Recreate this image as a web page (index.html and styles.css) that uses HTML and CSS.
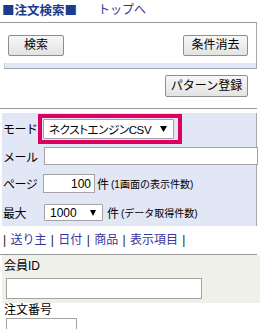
FILE: index.html
```html
<!DOCTYPE html>
<html lang="ja">
<head>
<meta charset="utf-8">
<title>注文検索</title>
<link rel="stylesheet" href="styles.css">
</head>
<body>
<div class="page">
  <header class="head">
    <h1 class="title">■注文検索■</h1>
    <a class="top-link" href="#">トップへ</a>
  </header>

  <div class="actions">
    <div class="btn-row">
      <button class="btn btn-search" type="button">検索</button>
      <button class="btn btn-clear" type="button">条件消去</button>
    </div>
    <div class="bar"></div>
  </div>

  <div class="pattern-row">
    <button class="btn btn-pattern" type="button">パターン登録</button>
  </div>

  <div class="form">
    <div class="row row-mode">
      <span class="lbl">モード</span>
      <span class="hl">
        <span class="sel sel-mode"><span class="sel-text">ネクストエンジンCSV</span><svg class="arw" width="7" height="6" viewBox="0 0 7 6"><polygon points="0,0 7,0 3.5,6" fill="#000"/></svg></span>
      </span>
    </div>
    <div class="row row-mail">
      <span class="lbl">メール</span>
      <input class="inp inp-mail" type="text">
    </div>
    <div class="row row-page">
      <span class="lbl">ページ</span>
      <input class="inp inp-page" type="text" value="100">
      <span class="unit">件</span>
      <span class="note">(1画面の表示件数)</span>
    </div>
    <div class="row row-max">
      <span class="lbl">最大</span>
      <span class="sel sel-max"><span class="sel-text">1000</span><svg class="arw" width="6" height="6" viewBox="0 0 6 6"><polygon points="0,0 6,0 3,6" fill="#000"/></svg></span>
      <span class="unit unit-max">件</span>
      <span class="note">(データ取得件数)</span>
    </div>
  </div>

  <nav class="tabs">
    <span class="pipe">|</span> <a href="#">送り主</a> <span class="pipe">|</span> <a href="#">日付</a> <span class="pipe">|</span> <a href="#">商品</a> <span class="pipe">|</span> <a href="#">表示項目</a> <span class="pipe">|</span>
  </nav>

  <div class="field field-member">
    <div class="flbl">会員ID</div>
    <input class="inp inp-member" type="text">
  </div>
  <div class="field field-order">
    <div class="flbl flbl-order">注文番号</div>
    <input class="inp inp-order" type="text">
  </div>
</div>
</body>
</html>
```

FILE: styles.css
```css
* { box-sizing: border-box; }

html, body {
  margin: 0;
  padding: 0;
  background: #fff;
}

body {
  font-family: "Liberation Sans", "Noto Sans CJK JP", sans-serif;
  font-size: 12px;
  color: #000;
  overflow: hidden;
}

.page {
  width: 260px;
}

/* header */
.head {
  width: 257px;
  height: 23px;
  border-bottom: 1px solid #9a9a9a;
  display: flex;
  align-items: flex-start;
  padding: 2px 0 0 2px;
  white-space: nowrap;
}

.title {
  margin: 0;
  font-family: "Noto Sans CJK JP", sans-serif;
  font-size: 12.5px;
  line-height: 16px;
  font-weight: bold;
  color: #1b3b8d;
}

.top-link {
  margin-left: 21px;
  font-size: 12px;
  line-height: 17px;
  color: #35359c;
  text-decoration: none;
}

/* action buttons */
.actions {
  width: 257px;
  border-right: 1px solid #a8a8a8;
}

.btn-row {
  display: flex;
  justify-content: space-between;
  padding: 12px 8px 7px 8px;
}

.btn {
  font-family: "Liberation Sans", "Noto Sans CJK JP", sans-serif;
  font-size: 12px;
  color: #000;
  height: 21px;
  padding: 0;
  border: 1px solid #8e8e8e;
  border-radius: 2px;
  background: linear-gradient(#f7f7f7, #e3e3e3);
  line-height: 19px;
  white-space: nowrap;
}

.btn-search { width: 56px; }
.btn-clear { width: 65px; }
.btn-pattern { width: 83px; height: 22px; }

.bar {
  margin-left: 4px;
  height: 6px;
  background: #e3e7f5;
  border-bottom: 1px solid #9da2b0;
  border-left: 1px solid #c8ccd8;
}

.pattern-row {
  width: 257px;
  height: 40px;
  border-bottom: 1px solid #9a9a9a;
  display: flex;
  justify-content: flex-end;
  padding: 6px 9px 0 0;
}

/* search form */
.form {
  margin: 4px 0 0 2px;
  width: 255px;
  background: #e2e7f6;
  border-right: 1px solid #a8a8a8;
}

.row {
  display: flex;
  align-items: center;
  white-space: nowrap;
}

.row-mode { height: 31px; }
.row-mail { height: 24px; }
.row-page { height: 31px; }
.row-max  { height: 27px; }

.lbl {
  width: 36px;
  padding-left: 1px;
  flex: none;
  white-space: nowrap;
  overflow: visible;
  letter-spacing: -0.5px;
}

.hl {
  display: flex;
  flex: none;
  border: 4px solid #dd0060;
  padding: 1px 4px 1px 1px;
}

.sel {
  display: flex;
  flex: none;
  align-items: center;
  justify-content: space-between;
  background: #fff;
  border: 1px solid #a3a3a3;
  border-radius: 1px;
  white-space: nowrap;
}

.sel-text {
  white-space: nowrap;
}

.sel-mode {
  width: 131px;
  height: 20px;
  padding: 0 6px 0 5px;
  font-size: 11.5px;
  font-feature-settings: "palt";
  letter-spacing: -0.4px;
}

.sel-max {
  margin-left: 6px;
  width: 59px;
  height: 17px;
  padding: 0 6px 0 5px;
}

.arw { display: block; flex: none; }

.inp {
  font-family: "Liberation Sans", "Noto Sans CJK JP", sans-serif;
  font-size: 12px;
  color: #000;
  background: #fff;
  border: 1px solid #a3a3a3;
  margin: 0;
  padding: 0 3px;
  outline: none;
}

.inp-mail {
  margin-left: 6px;
  width: 214px;
  height: 18px;
  flex: none;
}

.inp-page {
  margin-left: 5px;
  width: 52px;
  height: 19px;
  text-align: right;
  flex: none;
}

.unit {
  margin-left: 2px;
  font-size: 12px;
}

.unit-max { margin-left: 4px; }

.note {
  margin-left: 2px;
  font-size: 10px;
}

/* tab links */
.tabs {
  width: 257px;
  height: 29px;
  line-height: 28px;
  padding-left: 3px;
  border-bottom: 1px solid #9a9a9a;
  font-size: 12px;
  white-space: nowrap;
  word-spacing: 1px;
}

.tabs a {
  color: #3535a0;
  text-decoration: none;
}

.pipe { color: #222; }

/* fields */
.field {
  margin-left: 2px;
  padding-left: 2px;
}

.field-member {
  background: #f0f0eb;
  padding-bottom: 4px;
}

.flbl {
  height: 23px;
  line-height: 22px;
  font-size: 12px;
}

.flbl-order {
  height: 15px;
  line-height: 14px;
}

.inp-member {
  margin-left: 2px;
  width: 196px;
  height: 21px;
  display: block;
}

.inp-order {
  margin-left: 2px;
  width: 71px;
  height: 21px;
  display: block;
}
```
